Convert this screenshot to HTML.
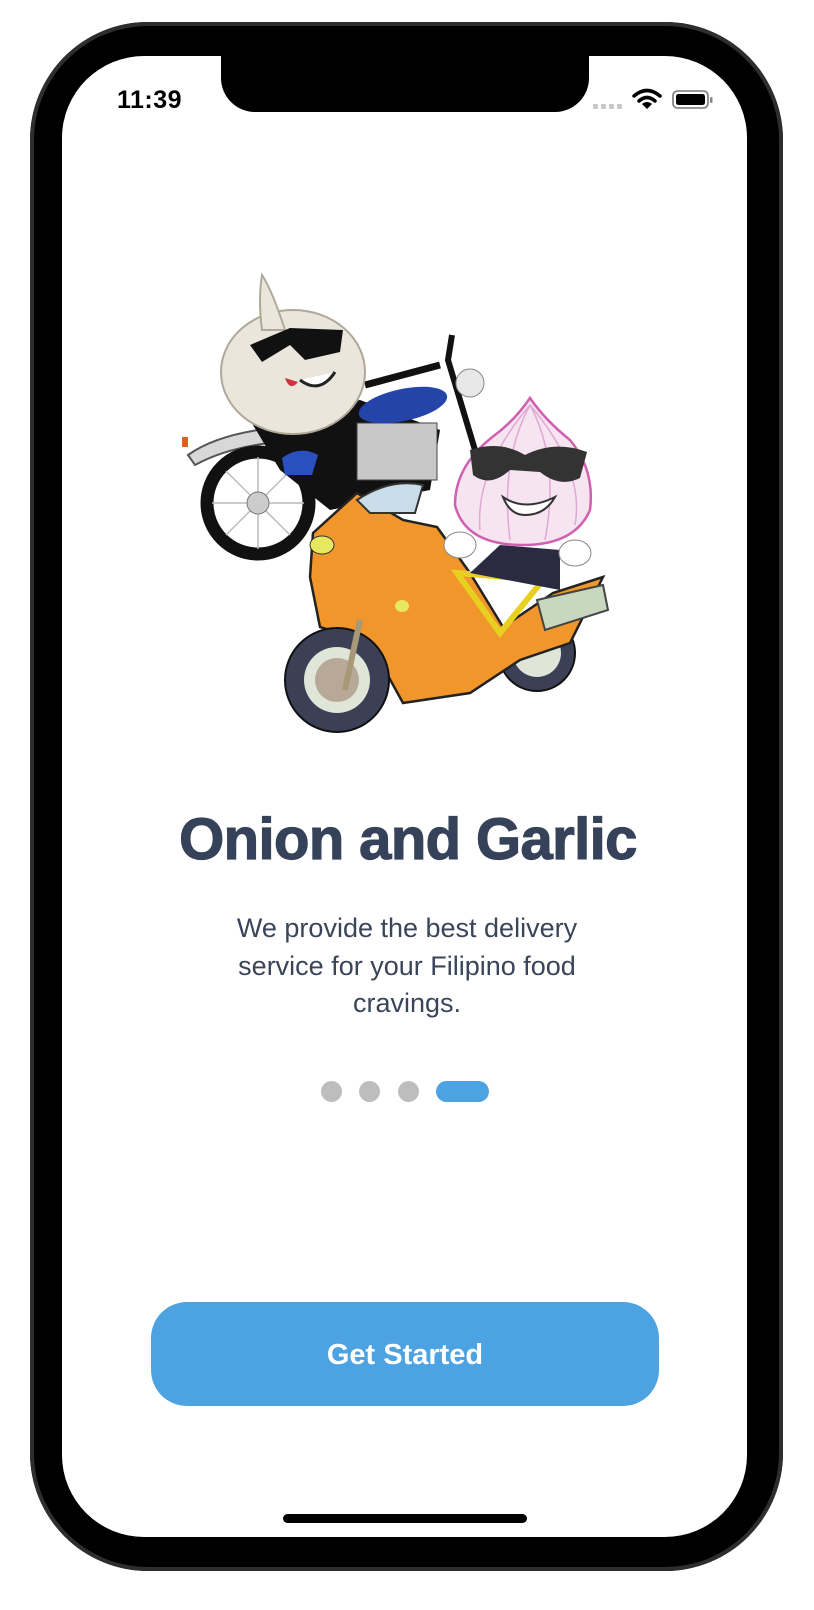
<!DOCTYPE html>
<html><head><meta charset="utf-8"><style>
html,body{margin:0;padding:0;background:#fff;width:814px;height:1610px;overflow:hidden;font-family:"Liberation Sans",sans-serif}
.abs{position:absolute}
.frame{left:30px;top:22px;width:753px;height:1549px;border-radius:118px;background:#000;box-shadow:inset 0 0 0 4px #2e2e2e}
.screen{left:62px;top:56px;width:685px;height:1481px;border-radius:82px;background:#fff;overflow:hidden}
.notch{left:221px;top:50px;width:368px;height:62px;background:#000;border-radius:0 0 34px 34px}
.time{left:117px;top:86px;font-size:25px;font-weight:bold;color:#000;letter-spacing:0.5px}
.title{left:0;width:814px;top:806px;text-align:center;font-size:58px;font-weight:bold;color:#36425a;letter-spacing:-0.6px;-webkit-text-stroke:1.2px #36425a;transform:translateX(1px)}
.body{left:0;width:814px;top:910px;text-align:center;font-size:27px;line-height:37.5px;color:#3a4559}
.dot{top:1081px;width:21px;height:21px;border-radius:11px;background:#bdbdbd}
.btn{left:151px;top:1302px;width:508px;height:104px;border-radius:36px;background:#4da3e2;color:#fff;font-size:29px;font-weight:bold;text-align:center;line-height:106px}
.home{left:283px;top:1514px;width:244px;height:9px;border-radius:5px;background:#000}
</style></head><body>
<div class="abs frame"></div>
<div class="abs screen"></div>
<div class="abs notch"></div>
<div class="abs time">11:39</div>
<svg class="abs" style="left:0;top:0" width="814" height="1610">
 <g fill="#c8c8c8"><rect x="593" y="104" width="5" height="5" rx="1"/><rect x="601" y="104" width="5" height="5" rx="1"/><rect x="609" y="104" width="5" height="5" rx="1"/><rect x="617" y="104" width="5" height="5" rx="1"/></g>
 <g fill="none" stroke="#000" stroke-width="3.5" stroke-linecap="round">
  <path d="M634 96 Q647 85 660 96"/><path d="M639 101 Q647 94 655 101"/>
 </g>
 <path d="M647 109 L642 104 Q647 100 652 104 Z" fill="#000"/>
 <rect x="673" y="91" width="35" height="17" rx="4.5" fill="none" stroke="#777" stroke-width="1.6"/>
 <rect x="676" y="94" width="29" height="11" rx="2.5" fill="#000"/>
 <rect x="710" y="97" width="2.5" height="6" rx="1" fill="#888"/>

 <!-- back bike -->
 <path d="M188 455 Q230 425 330 425 L320 440 Q240 440 195 465 Z" fill="#d8d8d8" stroke="#555" stroke-width="2"/>
 <rect x="182" y="437" width="6" height="10" fill="#e06020"/>
 <circle cx="258" cy="503" r="51" fill="#fff" stroke="#111" stroke-width="13"/>
 <g stroke="#bbb" stroke-width="1.5"><line x1="258" y1="457" x2="258" y2="549"/><line x1="212" y1="503" x2="304" y2="503"/><line x1="226" y1="471" x2="290" y2="535"/><line x1="226" y1="535" x2="290" y2="471"/></g>
 <circle cx="258" cy="503" r="11" fill="#ccc" stroke="#777"/>
 <path d="M250 420 L360 400 L440 430 L430 490 L330 510 L280 470 Z" fill="#111"/>
 <rect x="357" y="423" width="80" height="57" fill="#c8c8c8" stroke="#444"/>
 <ellipse cx="403" cy="405" rx="45" ry="16" fill="#2444aa" transform="rotate(-12 403 405)"/>
 <path d="M282 458 Q300 445 318 455 L312 475 L285 475 Z" fill="#2a50c0"/>
 <path d="M452 335 L448 360 L475 450" fill="none" stroke="#111" stroke-width="6"/>
 <circle cx="470" cy="383" r="14" fill="#e8e8e8" stroke="#888"/>
 <path d="M365 385 L440 365" stroke="#111" stroke-width="7"/>
 <!-- garlic -->
 <ellipse cx="293" cy="372" rx="72" ry="62" fill="#ebe6dc" stroke="#b0a898" stroke-width="2"/>
 <path d="M262 330 Q258 300 262 275 Q272 290 285 330 Z" fill="#ebe6dc" stroke="#b0a898" stroke-width="2"/>
 <path d="M250 345 L290 328 L343 330 L340 352 L305 360 L290 345 L262 362 Z" fill="#111"/>
 <path d="M285 378 Q290 392 298 382 Z" fill="#d03040"/>
 <path d="M300 380 Q320 395 335 372" fill="#fff" stroke="#222" stroke-width="3"/>

 <!-- front bike -->
 <circle cx="537" cy="653" r="38" fill="#3b4057" stroke="#111" stroke-width="2"/>
 <circle cx="537" cy="653" r="24" fill="#dfe6d8"/>
 <path d="M313 533 L357 493 L403 520 L437 527 L470 573 L503 627 L553 593 L603 577 L570 643 L520 660 L470 693 L403 703 L370 643 L320 627 L310 577 Z" fill="#f0962a" stroke="#222" stroke-width="2.5"/>
 <path d="M357 500 Q390 478 423 485 L415 513 L370 513 Z" fill="#c8dde8" stroke="#333" stroke-width="2"/>
 <path d="M457 573 L543 580 L500 633 Z" fill="none" stroke="#e8d020" stroke-width="6"/>
 <path d="M537 600 L603 585 L608 610 L545 630 Z" fill="#c8d8c0" stroke="#444" stroke-width="2"/>
 <ellipse cx="322" cy="545" rx="12" ry="9" fill="#e8e860" stroke="#333"/>
 <ellipse cx="402" cy="606" rx="7" ry="6" fill="#e8e860"/>
 <circle cx="337" cy="680" r="52" fill="#3b4057" stroke="#111" stroke-width="2"/>
 <circle cx="337" cy="680" r="33" fill="#dfe6d8"/>
 <circle cx="337" cy="680" r="22" fill="#b8a898"/>
 <path d="M360 620 L345 690" stroke="#a89878" stroke-width="6"/>
 <path d="M470 573 L500 545 L560 550 L560 590 Z" fill="#2a2a40"/>
 <!-- onion -->
 <path d="M530 398 Q545 420 570 440 Q595 470 590 510 Q575 545 523 545 Q465 545 455 505 Q455 465 495 435 Q515 420 530 398 Z" fill="#f6e4f1" stroke="#d060b0" stroke-width="2.5"/>
 <g fill="none" stroke="#e0a8d4" stroke-width="1.5"><path d="M530 405 Q500 460 510 540"/><path d="M530 405 Q560 460 545 540"/><path d="M530 405 Q475 470 480 530"/><path d="M530 405 Q585 470 575 525"/></g>
 <path d="M470 450 Q500 440 525 455 Q555 440 587 452 L580 478 Q560 488 540 472 L510 470 Q490 488 473 475 Z" fill="#333"/>
 <path d="M503 497 Q525 512 555 497 Q545 515 525 515 Q510 515 503 497 Z" fill="#fff" stroke="#333" stroke-width="2"/>
 <ellipse cx="460" cy="545" rx="16" ry="13" fill="#fff" stroke="#888"/>
 <ellipse cx="575" cy="553" rx="16" ry="13" fill="#fff" stroke="#888"/>
</svg>
<div class="abs title">Onion and Garlic</div>
<div class="abs body">We provide the best delivery<br>service for your Filipino food<br>cravings.</div>
<div class="abs dot" style="left:321px"></div>
<div class="abs dot" style="left:359px"></div>
<div class="abs dot" style="left:398px"></div>
<div class="abs dot" style="left:436px;width:53px;background:#4da3e2"></div>
<div class="abs btn">Get Started</div>
<div class="abs home"></div>
</body></html>
